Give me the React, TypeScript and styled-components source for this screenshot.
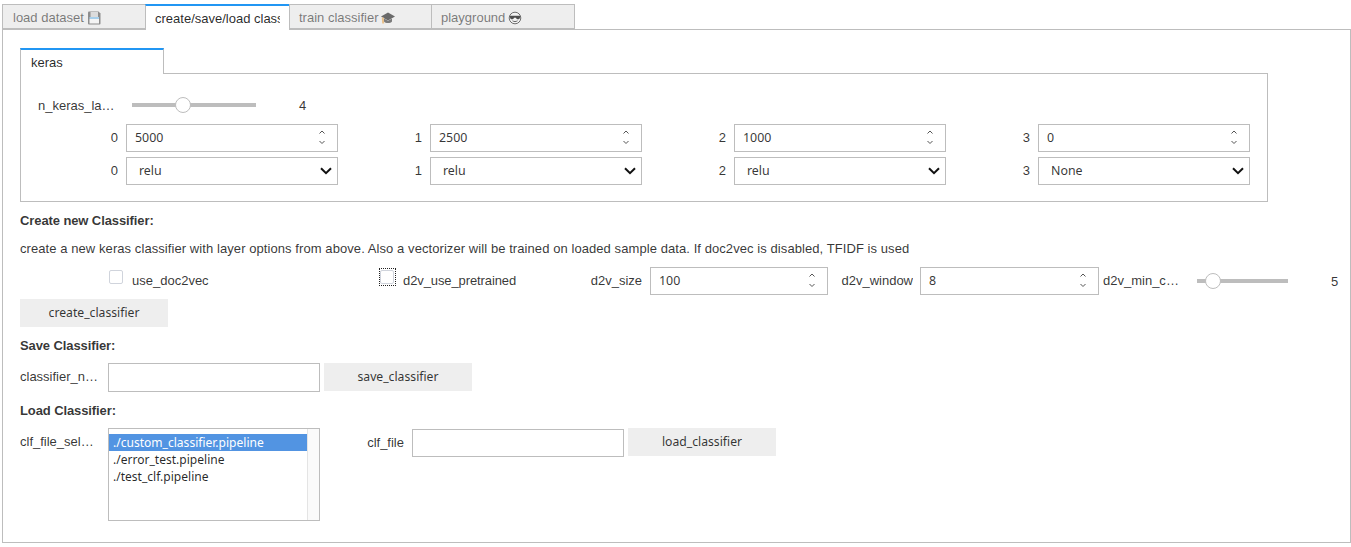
import React from "react";
import styled, { createGlobalStyle } from "styled-components";

const Global = createGlobalStyle`
  html, body { margin: 0; padding: 0; background: #fff; overflow: hidden; }
  body { font-family: "Liberation Sans", Arial, sans-serif; font-size: 13px; color: rgba(0,0,0,0.8); }
`;

const Page = styled.div`
  width: 1351px; height: 547px; padding-top: 4px; box-sizing: border-box;
`;
const TabBar = styled.div`
  display: flex; margin-left: 2px; height: 26px; position: relative; z-index: 1;
`;
const Tab = styled.div<{ $active?: boolean; $w: number }>`
  box-sizing: border-box; width: ${(p) => p.$w}px; height: ${(p) => (p.$active ? 26 : 25)}px;
  margin-left: -1px; padding: ${(p) => (p.$active ? "1px 9px 0 9px" : "2px 10px 0 9px")}; line-height: 22px; overflow: hidden; white-space: nowrap;
  background: ${(p) => (p.$active ? "#fff" : "#eeeeee")};
  color: ${(p) => (p.$active ? "rgba(0,0,0,.85)" : "rgba(0,0,0,.5)")};
  border: 1px solid #bdbdbd;
  border-bottom: ${(p) => (p.$active ? "none" : "1px solid #bdbdbd")};
  border-top: ${(p) => (p.$active ? "2px solid #2196f3" : "1px solid #bdbdbd")};
  display: flex; align-items: center; gap: 3px;
  &:first-child { margin-left: 0; padding-left: 10px; }
`;
const TabClip = styled.span`
  display: block; overflow: hidden; white-space: nowrap; width: 100%;
`;
const Panel = styled.div`
  box-sizing: border-box; margin: -1px 0 0 2px; height: 514px; width: 1349px;
  border: 1px solid #bdbdbd; padding: 18px 0 0 17px;
`;
const InnerTab = styled.div`
  box-sizing: border-box; width: 144px; height: 26px; margin-bottom: -1px; position: relative; z-index: 1;
  background: #fff; border: 1px solid #bdbdbd; border-bottom: none; border-top: 2px solid #2196f3;
  padding: 1px 0 0 10px; line-height: 24px; color: rgba(0,0,0,.85);
`;
const Box = styled.div`
  box-sizing: border-box; width: 1248px; height: 129px; border: 1px solid #bdbdbd;
  padding: 17px 0 0 17px;
`;
const SliderRow = styled.div`
  display: flex; align-items: center; height: 28px; margin-bottom: 5px;
`;
const Label = styled.div<{ $w?: number; $right?: boolean }>`
  flex: none; width: ${(p) => p.$w ?? 80}px; margin-right: 8px; line-height: 28px;
  white-space: nowrap; overflow: hidden; text-overflow: ellipsis;
  text-align: ${(p) => (p.$right ? "right" : "left")};
`;
const SliderLabel = styled(Label)`
  height: 28px; line-height: 30px;
`;
const Track = styled.div<{ $w: number; $ml: number }>`
  position: relative; flex: none; width: ${(p) => p.$w}px; height: 4px; margin-left: ${(p) => p.$ml}px; background: #bdbdbd;
`;
const Thumb = styled.div`
  position: absolute; top: -6px; width: 16px; height: 16px; box-sizing: border-box;
  border: 1px solid #bdbdbd; border-radius: 50%; background: #fff;
`;
const ReadOut = styled.div<{ $ml: number }>`
  margin-left: ${(p) => p.$ml}px; height: 28px; line-height: 30px;
`;
const Grid = styled.div`
  display: grid; grid-template-columns: repeat(4, 300px); column-gap: 4px; row-gap: 5px; width: 1212px;
`;
const Field = styled.div`
  display: flex; align-items: center; height: 28px;
`;
const InputWrap = styled.div<{ $w: number }>`
  position: relative; flex: none; width: ${(p) => p.$w}px; height: 28px;
`;
const TextBox = styled.input`
  box-sizing: border-box; width: 100%; height: 100%; margin: 0; padding: 0 8px 2px;
  border: 1px solid #bdbdbd; border-radius: 0; outline: none; background: #fff;
  font-family: "Noto Sans", sans-serif; font-size: 12.4px; color: rgba(0,0,0,.8);
`;
const SelectBox = styled.select`
  box-sizing: border-box; width: 100%; height: 100%; margin: 0; padding: 0 8px 2px 12px;
  appearance: none; border: 1px solid #bdbdbd; border-radius: 0; outline: none; background: #fff;
  font-family: "Noto Sans", sans-serif; font-size: 12.4px; color: rgba(0,0,0,.8);
`;
const Overlay = styled.svg<{ $r: number; $t: number }>`
  position: absolute; pointer-events: none; right: ${(p) => p.$r}px; top: ${(p) => p.$t}px;
`;
const Heading = styled.div<{ $mt: number }>`
  margin-top: ${(p) => p.$mt}px; font-weight: 700; line-height: 18px; height: 18px; letter-spacing: -0.1px;
`;
const Para = styled.div`
  margin-top: 10px; line-height: 18px; height: 18px; letter-spacing: 0.075px; white-space: nowrap;
`;
const Row = styled.div<{ $mt: number }>`
  display: flex; align-items: flex-start; margin-top: ${(p) => p.$mt}px;
`;
const CheckCell = styled.div<{ $w: number; $pl: number }>`
  display: flex; align-items: center; width: ${(p) => p.$w}px; padding-left: ${(p) => p.$pl}px; box-sizing: border-box; height: 28px; flex: none;
`;
const CheckText = styled.span<{ $tight?: boolean }>`
  margin-top: -2px; letter-spacing: ${(p) => (p.$tight ? "-0.1px" : "0")};
`;
const CheckFrame = styled.span<{ $focus?: boolean }>`
  display: inline-flex; box-sizing: border-box; width: 17px; height: 18px; padding: 2px 1px; margin-right: 7px; margin-top: -8px;
  outline: ${(p) => (p.$focus ? "1px dotted #222" : "none")}; outline-offset: -1px;
`;
const CheckBoxMark = styled.span`
  display: block; box-sizing: border-box; width: 14px; height: 14px; border: 1px solid #d0d4dc; border-radius: 2px; background: #fff;
`;
const Button = styled.button<{ $ml?: number }>`
  flex: none; box-sizing: border-box; width: 148px; height: 28px; margin: 0 0 0 ${(p) => p.$ml ?? 0}px; padding: 0 0 2px;
  border: none; background: #eeeeee; color: rgba(0,0,0,.8);
  font-family: "Noto Sans", sans-serif; font-size: 12.2px;
`;
const ListBox = styled.div`
  box-sizing: border-box; flex: none; width: 212px; height: 93px; border: 1px solid #bdbdbd; display: flex; background: #fff;
`;
const ListItems = styled.div`
  flex: 1; padding-top: 5px; font-family: "Noto Sans", sans-serif; font-size: 12.05px; color: rgba(0,0,0,.85);
`;
const Option = styled.div<{ $on?: boolean }>`
  height: 17px; line-height: 17px; padding-left: 4px;
  background: ${(p) => (p.$on ? "#5294e2" : "transparent")}; color: ${(p) => (p.$on ? "#fff" : "inherit")};
`;
const ScrollGutter = styled.div`
  width: 11px; border-left: 1px solid #e4e4e4; background: #fafafa;
`;
const IconSvg = styled.svg`
  flex: none;
`;

const Spin = () => (
  <Overlay $r={11} $t={5} width="10" height="18" viewBox="0 0 10 18" fill="none" stroke="#555" strokeWidth="1">
    <path d="M2.500 4.500 5 2l2.500 2.500M2.500 12 5 14.500 7.500 12" />
  </Overlay>
);
const Chevron = () => (
  <Overlay $r={6} $t={10} width="12" height="8" viewBox="0 0 12 8" fill="none" stroke="#111" strokeWidth="2">
    <path d="M1 1.200 6 6.200 11 1.200" />
  </Overlay>
);

const NumberField = ({ w, value }: { w: number; value: string }) => (
  <InputWrap $w={w}>
    <TextBox defaultValue={value} />
    <Spin />
  </InputWrap>
);
const ChoiceField = ({ value }: { value: string }) => (
  <InputWrap $w={212}>
    <SelectBox defaultValue={value}>
      <option>relu</option>
      <option>None</option>
    </SelectBox>
    <Chevron />
  </InputWrap>
);

const Floppy = () => (
  <IconSvg width="14" height="14" viewBox="0 0 14 14">
    <path d="M1 1.500Q1 .5 2 .5h9.500L13.500 2.500V12.500Q13.500 13.500 12.500 13.500H2Q1 13.500 1 12.500z" fill="#8d8d8d" />
    <rect x="3.500" y="1" width="7.500" height="5" fill="#dcdcdc" />
    <rect x="2.500" y="6" width="9.500" height="2" fill="#a8d0ec" />
    <rect x="2.500" y="8" width="9.500" height="4.500" fill="#f4f4f4" />
  </IconSvg>
);
const Cap = () => (
  <IconSvg width="14" height="14" viewBox="0 0 14 14">
    <path d="M0 5.500 7 1.500l7 4L7 9.500z" fill="#6a6a6a" />
    <path d="M3 7.500V10.500C4.500 12.500 9.500 12.500 11 10.500V7.500L7 9.800z" fill="#7b7b7b" />
    <path d="M1.800 6.500 2.200 12.500" stroke="#e8c08a" strokeWidth="2" />
  </IconSvg>
);
const Shades = () => (
  <IconSvg width="14" height="14" viewBox="0 0 14 14">
    <circle cx="7" cy="7" r="5.800" fill="#f4f4f4" stroke="#6e6e6e" />
    <path d="M1.800 4.800h10.400v1.200L11.500 7.800c-1 .8-3 .8-3.500-1H6c-.5 1.800-2.500 1.800-3.500 1L1.800 6z" fill="#4f4f4f" />
    <path d="M4.500 9.800c1.500 1 3.500 1 5 0" fill="none" stroke="#666" />
  </IconSvg>
);

export default function App() {
  return (
    <Page>
      <Global />
      <TabBar>
        <Tab $w={144}>load dataset <Floppy /></Tab>
        <Tab $w={145} $active><TabClip>create/save/load classifier</TabClip></Tab>
        <Tab $w={143}>train classifier <Cap /></Tab>
        <Tab $w={144}>playground <Shades /></Tab>
      </TabBar>
      <Panel>
        <InnerTab>keras</InnerTab>
        <Box>
          <SliderRow>
            <SliderLabel>n_keras_layers</SliderLabel>
            <Track $w={124} $ml={6}>
              <Thumb style={{ left: 43 }} />
            </Track>
            <ReadOut $ml={43}>4</ReadOut>
          </SliderRow>
          <Grid>
            {["5000", "2500", "1000", "0"].map((v, i) => (
              <Field key={i}>
                <Label $right>{i}</Label>
                <NumberField w={212} value={v} />
              </Field>
            ))}
            {["relu", "relu", "relu", "None"].map((v, i) => (
              <Field key={i}>
                <Label $right>{i}</Label>
                <ChoiceField value={v} />
              </Field>
            ))}
          </Grid>
        </Box>
        <Heading $mt={10}>Create new Classifier:</Heading>
        <Para>create a new keras classifier with layer options from above. Also a vectorizer will be trained on loaded sample data. If doc2vec is disabled, TFIDF is used</Para>
        <Row $mt={9}>
          <CheckCell $w={270} $pl={88}>
            <CheckFrame><CheckBoxMark /></CheckFrame>
            <CheckText>use_doc2vec</CheckText>
          </CheckCell>
          <CheckCell $w={270} $pl={89}>
            <CheckFrame $focus><CheckBoxMark /></CheckFrame>
            <CheckText $tight>d2v_use_pretrained</CheckText>
          </CheckCell>
          <Label $w={82} $right>d2v_size</Label>
          <NumberField w={178} value="100" />
          <Label $w={85} $right style={{ marginRight: 7 }}>d2v_window</Label>
          <NumberField w={179} value="8" />
          <Label $w={80} style={{ marginLeft: 4, marginRight: 14 }}>d2v_min_count</Label>
          <Track $w={91} $ml={0} style={{ marginTop: 12 }}>
            <Thumb style={{ left: 8 }} />
          </Track>
          <ReadOut $ml={43}>5</ReadOut>
        </Row>
        <Row $mt={4}>
          <Button>create_classifier</Button>
        </Row>
        <Heading $mt={10}>Save Classifier:</Heading>
        <Row $mt={8}>
          <Label>classifier_name</Label>
          <InputWrap $w={212} style={{ height: 29 }}><TextBox /></InputWrap>
          <Button $ml={4}>save_classifier</Button>
        </Row>
        <Heading $mt={10}>Load Classifier:</Heading>
        <Row $mt={8}>
          <Label>clf_file_selection</Label>
          <ListBox>
            <ListItems>
              <Option $on>./custom_classifier.pipeline</Option>
              <Option>./error_test.pipeline</Option>
              <Option>./test_clf.pipeline</Option>
            </ListItems>
            <ScrollGutter />
          </ListBox>
          <Label $w={84} $right style={{ marginTop: 1 }}>clf_file</Label>
          <InputWrap $w={212} style={{ marginTop: 1 }}><TextBox /></InputWrap>
          <Button $ml={4}>load_classifier</Button>
        </Row>
      </Panel>
    </Page>
  );
}
